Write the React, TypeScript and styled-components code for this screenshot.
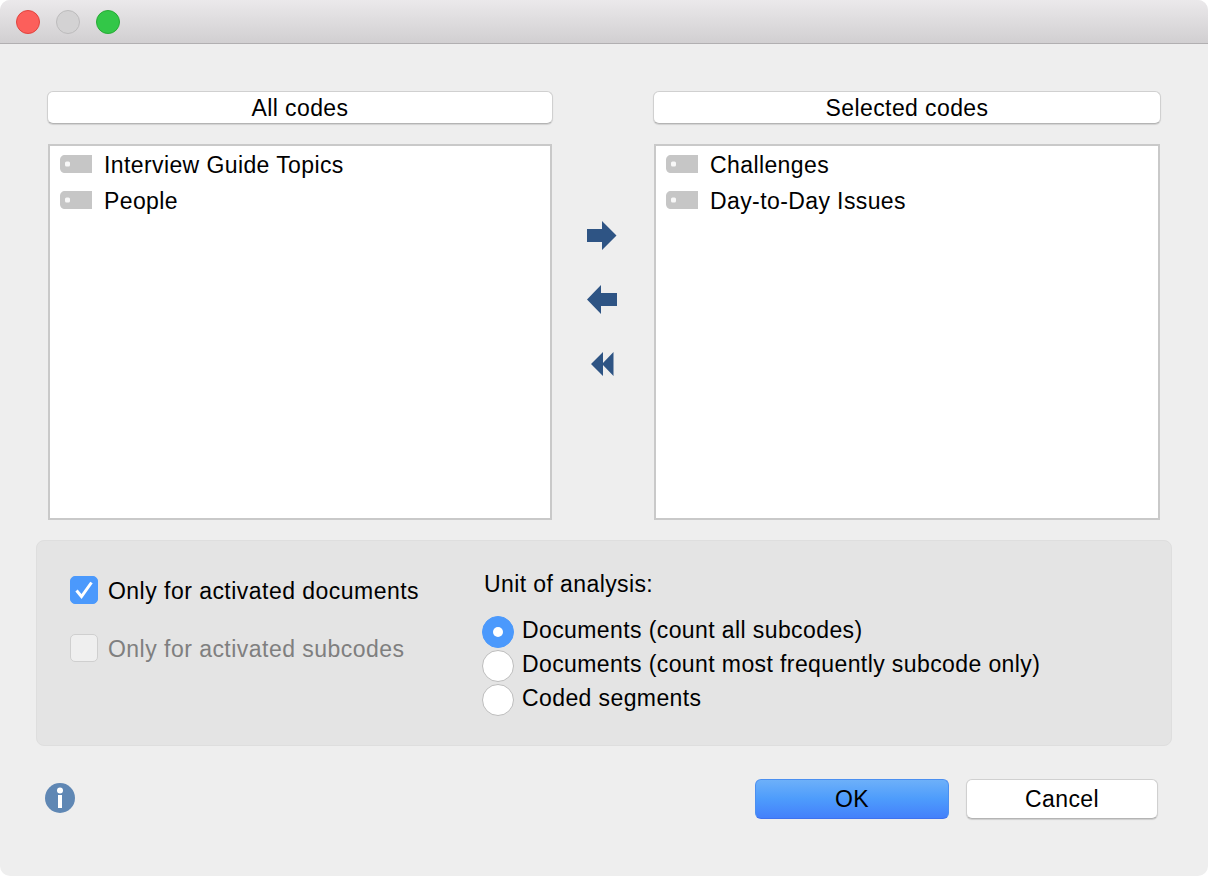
import React from 'react'
import styled, { createGlobalStyle } from 'styled-components'

const GlobalStyle = createGlobalStyle`
  html, body {
    margin: 0;
    padding: 0;
    background: #fff;
  }
  body {
    font-family: "Liberation Sans", Arial, sans-serif;
    font-size: 23px;
    letter-spacing: 0.4px;
    color: #000;
  }
`

const Window = styled.div`
  width: 1208px;
  height: 876px;
  display: flex;
  flex-direction: column;
  background: #eeeeee;
  border-radius: 10px;
  overflow: hidden;
`

const TitleBar = styled.div`
  height: 43px;
  flex: none;
  display: flex;
  align-items: center;
  gap: 16px;
  padding: 0 0 0 16px;
  background: linear-gradient(#ebe9eb, #d1cfd1);
  border-bottom: 1px solid #b1afb1;
`

const Light = styled.span<{ $fill: string; $edge: string }>`
  width: 24px;
  height: 24px;
  box-sizing: border-box;
  border-radius: 50%;
  background: ${({ $fill }) => $fill};
  border: 1px solid ${({ $edge }) => $edge};
`

const Content = styled.div`
  flex: 1;
  display: flex;
  flex-direction: column;
  padding: 47px 36px 0;
`

const Columns = styled.div`
  display: flex;
  padding: 0 11px;
`

const Column = styled.div<{ $width: number }>`
  width: ${({ $width }) => $width}px;
  flex: none;
  display: flex;
  flex-direction: column;
  gap: 20px;
`

const HeaderButton = styled.div`
  height: 33px;
  box-sizing: border-box;
  display: flex;
  align-items: center;
  justify-content: center;
  background: #fff;
  border-radius: 6px;
  border: 1px solid #d0d0d0;
  border-bottom-color: #b4b4b4;
  box-shadow: 0 1px 1px rgba(0, 0, 0, 0.12);
  line-height: 26px;
`

const ListBox = styled.div`
  height: 376px;
  box-sizing: border-box;
  margin: 0 1px;
  padding: 0 10px;
  background: #fff;
  border: 2px solid #c9c9c9;
`

const ListRow = styled.div`
  height: 36px;
  display: flex;
  align-items: center;
  gap: 12px;
`

const RowText = styled.span`
  padding-top: 2px;
`

const Arrows = styled.div`
  flex: 1;
  display: flex;
  flex-direction: column;
  align-items: center;
  gap: 34px;
  padding-top: 130px;
`

const ArrowButton = styled.svg`
  display: block;
  width: 32px;
  height: 30px;
`

const OptionsPanel = styled.div`
  height: 206px;
  box-sizing: border-box;
  margin-top: 20px;
  display: flex;
  padding: 29px 0 0 33px;
  background: #e4e4e4;
  border: 1px solid #dedede;
  border-radius: 8px;
`

const CheckColumn = styled.div`
  width: 412px;
  flex: none;
  display: flex;
  flex-direction: column;
  gap: 30px;
  padding-top: 6px;
`

const CheckRow = styled.div<{ $disabled?: boolean }>`
  display: flex;
  align-items: center;
  gap: 10px;
  height: 28px;
  letter-spacing: 0.47px;
  color: ${({ $disabled }) => ($disabled ? '#7f7f7f' : '#000')};
`

const CheckBox = styled.span<{ $checked?: boolean }>`
  width: 28px;
  height: 28px;
  flex: none;
  box-sizing: border-box;
  display: flex;
  align-items: center;
  justify-content: center;
  border-radius: 5px;
  background: ${({ $checked }) => ($checked ? '#4b99fc' : '#efefef')};
  border: 1px solid ${({ $checked }) => ($checked ? '#4b99fc' : '#cfcfcf')};
`

const UnitColumn = styled.div`
  display: flex;
  flex-direction: column;
`

const UnitLabel = styled.div`
  height: 28px;
  margin-bottom: 15px;
  display: flex;
  align-items: center;
  padding-left: 2px;
`

const RadioRow = styled.div`
  height: 34px;
  display: flex;
  align-items: center;
  gap: 8px;
`

const Radio = styled.span<{ $checked?: boolean }>`
  width: 32px;
  height: 32px;
  flex: none;
  margin-top: 4px;
  box-sizing: border-box;
  display: flex;
  align-items: center;
  justify-content: center;
  border-radius: 50%;
  background: ${({ $checked }) => ($checked ? '#4b99fc' : '#fff')};
  border: 1px solid ${({ $checked }) => ($checked ? '#4b99fc' : '#bdbdbd')};
`

const RadioDot = styled.span`
  width: 10px;
  height: 10px;
  border-radius: 50%;
  background: #fff;
`

const Footer = styled.div`
  margin-top: 33px;
  display: flex;
  align-items: center;
  padding: 0 14px 0 9px;
`

const InfoIcon = styled.svg`
  width: 30px;
  height: 30px;
  display: block;
  margin: 0 auto 2px 0;
`

const OkButton = styled.div`
  width: 194px;
  height: 40px;
  box-sizing: border-box;
  display: flex;
  align-items: center;
  justify-content: center;
  border-radius: 6px;
  background: linear-gradient(#6db0f9, #4d9cfc 50%, #4480fb);
  border: 1px solid #4b8ff0;
  border-bottom-color: #3f72ee;
`

const CancelButton = styled.div`
  width: 192px;
  height: 40px;
  margin-left: 17px;
  box-sizing: border-box;
  display: flex;
  align-items: center;
  justify-content: center;
  border-radius: 6px;
  background: #fff;
  border: 1px solid #d0d0d0;
  border-bottom-color: #b4b4b4;
  box-shadow: 0 1px 1px rgba(0, 0, 0, 0.14);
`

const TagIcon = styled.svg`
  display: block;
  flex: none;
  width: 32px;
  height: 18px;
`

const CodeTag = () => (
  <TagIcon viewBox="0 0 32 18">
    <path d="M5 0H32V18H5C2 18 0 16 0 13V5C0 2 2 0 5 0Z" fill="#c6c6c6" />
    <rect x="5" y="6.5" width="5" height="5" rx="1.5" fill="#f8f8f8" />
  </TagIcon>
)

const Check = () => (
  <svg width="20" height="20" viewBox="0 0 20 20">
    <path d="M2.5 10.5L7.5 16.5L17.5 2.5" fill="none" stroke="#fff" strokeWidth="3" />
  </svg>
)

const codes = {
  all: ['Interview Guide Topics', 'People'],
  selected: ['Challenges', 'Day-to-Day Issues'],
}

const CodeList = ({ items }: { items: string[] }) => (
  <ListBox>
    {items.map((item) => (
      <ListRow key={item}>
        <CodeTag />
        <RowText>{item}</RowText>
      </ListRow>
    ))}
  </ListBox>
)

export default function App() {
  return (
    <>
      <GlobalStyle />
      <Window>
        <TitleBar>
          <Light $fill="#fc5f5b" $edge="#e0443e" />
          <Light $fill="#d3d2d3" $edge="#bcbbbc" />
          <Light $fill="#33c748" $edge="#27aa35" />
        </TitleBar>
        <Content>
          <Columns>
            <Column $width={506}>
              <HeaderButton>All codes</HeaderButton>
              <CodeList items={codes.all} />
            </Column>
            <Arrows>
              <ArrowButton viewBox="0 0 32 30">
                <path d="M0 8H15V0L29.5 14.5L15 29V21H0Z" fill="#2e5484" />
              </ArrowButton>
              <ArrowButton viewBox="0 0 32 30">
                <path d="M30 8H14V0L0 14.5L14 29V21H30Z" fill="#2e5484" />
              </ArrowButton>
              <ArrowButton viewBox="0 0 32 30">
                <path d="M16 3V27L4 15ZM26.5 3V27L15 15Z" fill="#2e5484" />
              </ArrowButton>
            </Arrows>
            <Column $width={508}>
              <HeaderButton>Selected codes</HeaderButton>
              <CodeList items={codes.selected} />
            </Column>
          </Columns>
          <OptionsPanel>
            <CheckColumn>
              <CheckRow>
                <CheckBox $checked>
                  <Check />
                </CheckBox>
                <RowText>Only for activated documents</RowText>
              </CheckRow>
              <CheckRow $disabled>
                <CheckBox />
                <RowText>Only for activated subcodes</RowText>
              </CheckRow>
            </CheckColumn>
            <UnitColumn>
              <UnitLabel>Unit of analysis:</UnitLabel>
              <RadioRow>
                <Radio $checked>
                  <RadioDot />
                </Radio>
                Documents (count all subcodes)
              </RadioRow>
              <RadioRow>
                <Radio />
                Documents (count most frequently subcode only)
              </RadioRow>
              <RadioRow>
                <Radio />
                Coded segments
              </RadioRow>
            </UnitColumn>
          </OptionsPanel>
          <Footer>
            <InfoIcon viewBox="0 0 30 30">
              <circle cx="15" cy="15" r="15" fill="#5f87b4" />
              <circle cx="15" cy="7.5" r="3" fill="#fff" />
              <rect x="13" y="12" width="4" height="13" fill="#fff" />
            </InfoIcon>
            <OkButton>OK</OkButton>
            <CancelButton>Cancel</CancelButton>
          </Footer>
        </Content>
      </Window>
    </>
  )
}
